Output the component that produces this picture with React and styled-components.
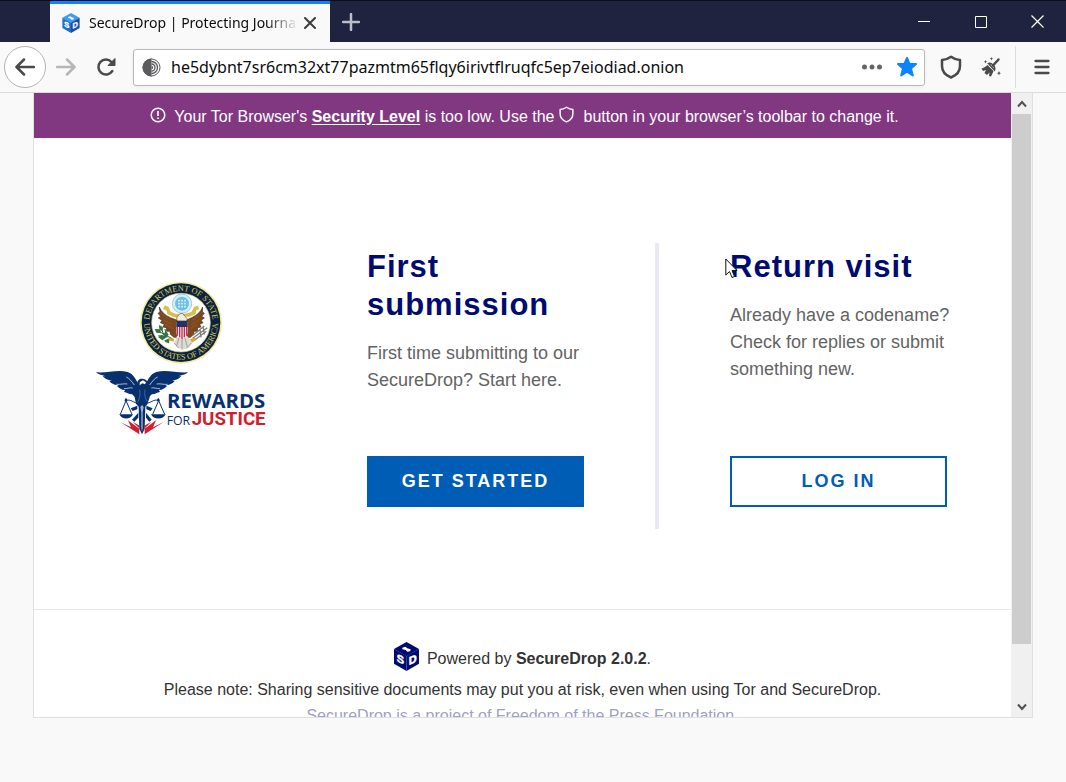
import React, { useState } from "react";
import styled, { createGlobalStyle } from "styled-components";

const GlobalStyle = createGlobalStyle`
  * {
    box-sizing: border-box;
  }
  body {
    margin: 0;
    background: #f9f9fa;
    font-family: "Liberation Sans", Arial, sans-serif;
    font-size: 16px;
  }
  button {
    font-family: inherit;
    padding: 0;
    border: none;
    background: none;
    cursor: pointer;
  }
  svg {
    display: block;
  }
`;

const BROWSER = styled.div`
  display: flex;
  flex-direction: column;
  height: 100vh;
  overflow: hidden;
`;

/* window title bar */
const TITLEBAR = styled.header`
  display: flex;
  flex: none;
  height: 42px;
  padding-left: 50px;
  background: #202340;
  border-top: 1px solid #0c0c14;
`;
const TAB = styled.div`
  display: flex;
  align-items: center;
  width: 280px;
  padding: 0 8px 0 12px;
  background: #f9f9fa;
  border-top: 3px solid #0a84ff;
`;
const TABTITLE = styled.span`
  flex: 1;
  margin-left: 9px;
  overflow: hidden;
  white-space: nowrap;
  font-family: "Noto Sans", sans-serif;
  font-size: 14px;
  line-height: 24px;
  color: #0c0c0d;
  mask-image: linear-gradient(to left, transparent, #000 32px);
`;
const TABBUTTON = styled.button`
  display: grid;
  place-items: center;
  width: ${(props) => props.$width || 24}px;
`;
const WINDOWBUTTONS = styled.div`
  display: flex;
  margin-left: auto;
`;

/* navigation toolbar */
const TOOLBAR = styled.nav`
  display: flex;
  flex: none;
  align-items: center;
  height: 51px;
  padding: 0 4px;
  background: #f9f9fa;
  border-bottom: 1px solid #dcdcdd;
`;
const ICONBUTTON = styled.button`
  display: grid;
  place-items: center;
  width: 40px;
  height: 40px;
`;
const BACK = styled(ICONBUTTON)`
  width: 42px;
  height: 42px;
  border: 1px solid #b4b4b6;
  border-radius: 50%;
  background: #fff;
`;
const URLBAR = styled.div`
  display: flex;
  flex: 1;
  align-items: center;
  height: 37px;
  margin: 0 6px 0 7px;
  padding-left: 8px;
  border: 1px solid #b8b8ba;
  border-radius: 3px;
  background: #fff;
  box-shadow: 0 1px 4px rgba(0, 0, 0, 0.06);
`;
const URLINPUT = styled.input`
  flex: 1;
  min-width: 0;
  height: 32px;
  padding: 0;
  margin-left: 10px;
  border: none;
  outline: none;
  background: none;
  font-family: "Noto Sans", sans-serif;
  font-size: 16px;
  color: #0c0c0d;
`;
const URLACTION = styled.button`
  display: grid;
  place-items: center;
  width: 35px;
  height: 32px;
`;
const SEPARATOR = styled.span`
  width: 1px;
  height: 42px;
  margin: 0 6px 0 4px;
  background: #dcdcdd;
`;

/* letterboxed page */
const STAGE = styled.div`
  display: flex;
  flex: 1;
  min-height: 0;
  padding: 0 33px 64px;
`;
const FRAME = styled.div`
  display: flex;
  flex: 1;
  min-width: 0;
  border: 1px solid #e0e0e1;
  border-top: none;
  background: #fff;
`;
const PAGE = styled.div`
  flex: 1;
  min-width: 0;
  overflow: hidden;
`;
const SCROLLBAR = styled.div`
  display: flex;
  flex: none;
  flex-direction: column;
  width: 21px;
  padding: 0 1px;
  background: #f0f0f0;
`;
const SCROLLBUTTON = styled.button`
  display: grid;
  place-items: center;
  height: 21px;
`;
const TRACK = styled.div`
  flex: 1;
`;
const THUMB = styled.div`
  background: #cdcdcd;
`;

const BANNER = styled.div`
  display: flex;
  align-items: center;
  justify-content: center;
  min-height: 45px;
  padding-top: 2px;
  background: #813881;
  color: #fff;
  line-height: 20px;
  a {
    color: #fff;
    font-weight: bold;
    text-underline-offset: 2px;
  }
  svg {
    flex: none;
    margin: 0 8px 4px 4px;
  }
`;

const MAIN = styled.main`
  display: grid;
  grid-template-columns: 262fr 363fr 352fr;
  padding: 105px 0 80px;
`;
const LOGO = styled.div`
  padding: 37px 0 0 61px;
`;
const CHOICE = styled.section`
  display: flex;
  flex-direction: column;
  align-items: flex-start;
  min-height: 286px;
  padding: 5px 56px 22px 71px;
  border-right: ${(props) => (props.$divided ? "4px solid #e8e8f6" : "none")};
`;
const H2 = styled.h2`
  position: relative;
  margin: 0 0 16px;
  color: #000b70;
  font-size: 31px;
  line-height: 38px;
  letter-spacing: 1px;
`;
const TEXT = styled.p`
  margin: 0;
  color: #636363;
  font-size: 18px;
  line-height: 27px;
`;
const CTA = styled.button`
  width: 217px;
  height: 51px;
  margin-top: auto;
  border: 2px solid #005db5;
  background: ${(props) => (props.$primary ? "#005db5" : "#fff")};
  color: ${(props) => (props.$primary ? "#fff" : "#005db5")};
  font-size: 18px;
  font-weight: bold;
  letter-spacing: 2px;
  text-transform: uppercase;
`;
/* mouse pointer resting on top of the heading */
const POINTER = styled.svg`
  position: absolute;
  left: -5px;
  top: 10px;
`;

const FOOTER = styled.footer`
  padding-top: 32px;
  border-top: 1px solid #e8e8ee;
  color: #333;
  text-align: center;
`;
const POWERED = styled.div`
  display: flex;
  align-items: flex-start;
  justify-content: center;
  gap: 8px;
  height: 30px;
  line-height: 20px;
  span {
    margin-top: 7px;
  }
`;
const NOTE = styled.p`
  margin: 8px 0 6px;
  line-height: 20px;
`;
const PROJECTLINK = styled.a`
  display: inline-block;
  color: #a09fc6;
  line-height: 20px;
  text-decoration: none;
`;

const CUBE_COLORS = {
  blue: { top: "#3f9bef", left: "#1c6fd0", right: "#124f9f" },
  navy: { top: "#000b70", left: "#000b70", right: "#000b70" },
};

const Cube = ({ width, height, tone }) => {
  const c = CUBE_COLORS[tone];
  return (
    <svg width={width} height={height} viewBox="0 0 75 87" aria-hidden="true">
      <path d="M37.5 0 75 21 37.5 43 0 21Z" fill={c.top} />
      <path d="M0 21 37.5 42V87L0 65Z" fill={c.left} />
      <path d="M75 21 37.5 42V87L75 65Z" fill={c.right} />
      <path
        d="M25 17 34 14 40 19 50 22 49 28 40 29 35 24 25 22Z"
        fill="#fff"
      />
      <g
        fill="#fff"
        stroke="#fff"
        strokeWidth="1.5"
        fontFamily="Liberation Sans, sans-serif"
        fontWeight="bold"
        fontSize="33"
        textAnchor="middle"
      >
        <text transform="translate(19 63) skewY(22)">S</text>
        <text transform="translate(56 64) skewY(-22)">D</text>
      </g>
    </svg>
  );
};

const Seal = () => (
  <g>
    <circle cx="288" cy="158" r="123" fill="#f2ec9d" />
    <circle cx="288" cy="158" r="118" fill="#0d2240" />
    <circle cx="288" cy="158" r="88" fill="#fff" stroke="#d9cf7c" strokeWidth="2" />
    <path id="sealTop" d="M193 158A95 95 0 0 1 383 158" fill="none" />
    <path id="sealBottom" d="M177 158A111 111 0 0 0 399 158" fill="none" />
    <g
      fill="#d5ca58"
      fontFamily="Liberation Serif, serif"
      textAnchor="middle"
    >
      <text fontSize="25">
        <textPath href="#sealTop" startOffset="50%">
          DEPARTMENT OF STATE
        </textPath>
      </text>
      <text fontSize="25">
        <textPath href="#sealBottom" startOffset="50%">
          UNITED STATES OF AMERICA
        </textPath>
      </text>
    </g>
    {/* glory above the eagle */}
    <circle cx="291" cy="101" r="29" fill="#d5eef9" stroke="#75b9dc" strokeWidth="2" />
    <circle cx="291" cy="101" r="21" fill="#71bee5" />
    <g fill="#e9f8ff">
      {[282, 291, 300].map((x) =>
        [92, 101, 110].map((y) => <circle key={x + "-" + y} cx={x} cy={y} r="2.5" />)
      )}
    </g>
    <path
      d="M240 107 251 112 254 124 268 131 284 134 298 133 320 127 328 112 338 108 341 117 333 120 331 132 314 139 267 140 248 132 245 120 235 117Z"
      fill="#dfbf3e"
      stroke="#b79632"
      strokeWidth="1"
    />
    {/* wings */}
    <path
      d="M223 111C229 126 240 136 256 143L277 151 279 202 267 202 256 193 255 184 245 184 244 173 234 171 238 163 226 158 231 151 220 144 227 139 219 130 225 126Z"
      fill="#7b481f"
      stroke="#4b2a15"
      strokeWidth="2"
    />
    <path
      d="M353 111C347 126 336 136 320 143L303 151 304 202 316 202 326 193 327 184 337 184 338 173 348 171 344 163 354 158 348 151 358 144 350 139 358 130 352 126Z"
      fill="#7b481f"
      stroke="#4b2a15"
      strokeWidth="2"
    />
    <path
      d="M230 132 257 151M234 149 260 163M241 163 263 175M347 132 322 151M343 149 320 163M337 163 316 175"
      stroke="#8d5729"
      strokeWidth="3"
    />
    <path d="M277 196 305 196 322 219 312 232 293 239 278 232 267 219Z" fill="#dedbd4" />
    <path
      d="M291 204V238M282 204 275 227M300 204 307 231M268 219 281 235M319 219 303 236"
      stroke="#85807a"
      strokeWidth="2"
    />
    <path d="M275 143 283 132 293 130 299 138 307 146 303 161 277 161Z" fill="#f1ebdc" stroke="#77502d" strokeWidth="2" />
    <path d="M279 136 268 140 277 143Z" fill="#d6a635" />
    <path d="M274 155H308V187C308 201 296 205 291 208C284 204 274 201 274 187Z" fill="#f8e9eb" />
    <path
      d="M277 170V197M284 170V202M291 170V207M298 170V202M305 170V197"
      stroke="#c52e51"
      strokeWidth="4"
    />
    <path d="M274 152H308V171H274Z" fill="#26335e" />
    {/* olive branch and arrows */}
    <path d="M218 182 263 207M228 175 239 199M240 177 246 203M220 197 241 200" stroke="#286838" strokeWidth="3" />
    <path
      d="M209 177 226 178 228 190 214 188ZM222 164 234 172 233 184 223 178ZM219 201 231 194 245 202 232 211ZM243 182 251 194 242 204 236 192ZM238 211 254 205 252 220 242 217Z"
      fill="#347640"
    />
    <path
      d="M323 205 367 173M326 212 364 184M322 197 358 168M345 179 348 202M355 173 358 194"
      stroke="#7d7f7f"
      strokeWidth="4"
    />
    <path d="M250 203 267 207 266 215 251 211ZM315 208 330 202 334 209 321 218Z" fill="#d8a936" />
  </g>
);

const Wing = () => (
  <g>
    <path
      d="M33 307C65 310 98 298 128 306C147 312 151 328 160 340L158 363 163 391C151 388 149 378 141 373 130 373 126 367 117 366L120 360C109 360 102 354 96 348L101 346C89 346 78 340 73 333L81 332C67 330 57 325 53 318L62 319C48 315 39 312 33 307Z"
      fill="#08306e"
    />
    <path
      d="M94 343C108 344 117 340 127 342M117 356C128 356 135 352 143 354M124 321C133 325 140 334 148 345"
      fill="none"
      stroke="#fff"
      strokeWidth="2"
    />
  </g>
);

const RewardsLogo = () => (
  <svg
    width="173"
    height="156"
    viewBox="30 30 519 468"
    role="img"
    aria-label="Rewards for Justice, Department of State"
  >
    <Seal />
    <Wing />
    <g transform="translate(342 0) scale(-1 1)">
      <Wing />
    </g>
    {/* head, body and sword */}
    <path
      d="M158 344C155 330 164 325 173 326C184 327 190 335 187 346L185 355 191 362 194 382 187 403 181 410 179 476 171 493 163 476 161 410 153 401 149 382 153 362Z"
      fill="#08306e"
    />
    <path d="M164 337 174 331 183 337 180 343 172 340 164 346Z" fill="#fff" />
    <path
      d="M164 359C167 374 164 386 157 398M180 359C177 375 182 387 187 395"
      fill="none"
      stroke="#5f7fae"
      strokeWidth="2"
    />
    <path d="M166 411 171 405 176 411 174 421V475L171 484 168 475V421Z" fill="#9fb2cc" />
    <path d="M171 424V480" stroke="#08306e" strokeWidth="2" />
    {/* scales */}
    <path
      d="M123 392C136 385 148 401 160 399H184C196 401 207 385 221 392M123 392 106 433M123 392 141 433M221 392 203 433M221 392 239 433"
      fill="none"
      stroke="#08306e"
      strokeWidth="3"
    />
    <path
      d="M103 433H144C138 450 109 450 103 433ZM198 433H242C236 450 204 450 198 433ZM119 389 123 383 127 389V394H119ZM216 389 220 383 224 389V394H216Z"
      fill="#08306e"
    />
    <path
      d="M137 415 157 407V418L143 423ZM184 407 203 415 197 423 184 418ZM141 449 160 428V443L148 455ZM183 428 200 449 193 455 183 443Z"
      fill="#08306e"
    />
    <path
      d="M106 456 138 472 129 451 163 476V493ZM236 456 204 472 213 451 179 476V493ZM143 455 164 467V476ZM199 455 178 467V476Z"
      fill="#d3202f"
    />
    <text
      x="246"
      y="415"
      fill="#08306e"
      fontFamily="Open Sans, sans-serif"
      fontWeight="bold"
      fontSize="61"
    >
      REWARDS
    </text>
    <text x="245" y="465" fill="#08306e" fontFamily="Open Sans, sans-serif" fontSize="37">
      FOR
    </text>
    <text
      x="320"
      y="465"
      fill="#cf202e"
      fontFamily="Roboto, sans-serif"
      fontWeight="bold"
      fontSize="56"
    >
      JUSTICE
    </text>
  </svg>
);

const Shield = ({ size, color, strokeWidth }) => (
  <svg width={size} height={size} viewBox="0 0 24 24" aria-hidden="true">
    <path
      d="M12 1.8C9 4 6 5 3 5V11C3 16.500 7 20.500 12 22.500C17 20.500 21 16.500 21 11V5C18 5 15 4 12 1.800Z"
      fill="none"
      stroke={color}
      strokeWidth={strokeWidth}
      strokeLinejoin="round"
    />
  </svg>
);

const TitleBar = () => (
  <TITLEBAR>
    <TAB>
      <Cube width={18} height={20} tone="blue" />
      <TABTITLE>SecureDrop | Protecting Journalists</TABTITLE>
      <TABBUTTON aria-label="Close tab">
        <svg width="12" height="12" viewBox="0 0 12 12">
          <path d="M1 1 11 11M11 1 1 11" stroke="#3d3d3f" strokeWidth="2" strokeLinecap="round" />
        </svg>
      </TABBUTTON>
    </TAB>
    <TABBUTTON $width={42} aria-label="New tab">
      <svg width="18" height="18" viewBox="0 0 18 18">
        <path d="M9 1V17M1 9H17" stroke="#bcbdc6" strokeWidth="2.5" strokeLinecap="round" />
      </svg>
    </TABBUTTON>
    <WINDOWBUTTONS>
      <TABBUTTON $width={57} aria-label="Minimize">
        <svg width="12" height="12" viewBox="0 0 12 12">
          <path d="M0 5.500H12" stroke="#fff" />
        </svg>
      </TABBUTTON>
      <TABBUTTON $width={57} aria-label="Maximize">
        <svg width="12" height="12" viewBox="0 0 12 12">
          <path d="M.5.5H11.500V11.500H.5Z" fill="none" stroke="#fff" />
        </svg>
      </TABBUTTON>
      <TABBUTTON $width={57} aria-label="Close">
        <svg width="13" height="13" viewBox="0 0 13 13">
          <path d="M.5.5 12.500 12.500M12.500.5.5 12.500" stroke="#fff" strokeWidth="1.2" />
        </svg>
      </TABBUTTON>
    </WINDOWBUTTONS>
  </TITLEBAR>
);

const Toolbar = () => {
  const [url, setUrl] = useState(
    "he5dybnt7sr6cm32xt77pazmtm65flqy6irivtflruqfc5ep7eiodiad.onion"
  );

  const handleChange = (e) => {
    setUrl(e.target.value);
  };

  return (
    <TOOLBAR>
      <BACK aria-label="Back">
        <svg width="20" height="18" viewBox="0 0 20 18">
          <path
            d="M19 9H2M9 1.500 1.500 9 9 16.500"
            fill="none"
            stroke="#4a4a4c"
            strokeWidth="2.500"
            strokeLinecap="round"
            strokeLinejoin="round"
          />
        </svg>
      </BACK>
      <ICONBUTTON aria-label="Forward">
        <svg width="20" height="18" viewBox="0 0 20 18">
          <path
            d="M1 9H18M11 1.500 18.500 9 11 16.500"
            fill="none"
            stroke="#b6b6b8"
            strokeWidth="2.500"
            strokeLinecap="round"
            strokeLinejoin="round"
          />
        </svg>
      </ICONBUTTON>
      <ICONBUTTON aria-label="Reload">
        <svg width="20" height="20" viewBox="0 0 20 20">
          <path
            d="M16.300 14A7.500 7.500 0 1 1 15.500 5"
            fill="none"
            stroke="#4a4a4c"
            strokeWidth="2.500"
            strokeLinecap="round"
          />
          <path d="M19 1.500V8.500H12Z" fill="#4a4a4c" stroke="#4a4a4c" strokeLinejoin="round" />
        </svg>
      </ICONBUTTON>
      <URLBAR>
        <svg width="19" height="19" viewBox="0 0 19 19" aria-hidden="true">
          <circle cx="9.5" cy="9.5" r="8.500" fill="#f5f5f5" stroke="#5b5b5d" />
          <path d="M9.500.5A9 9 0 0 0 9.500 18.500Z" fill="#5b5b5d" />
          <path
            d="M9.500 3.500A6 6 0 0 1 9.500 15.500M9.500 6A3.500 3.500 0 0 1 9.500 13M9.500 8.500A1 1 0 0 1 9.500 10.500"
            fill="none"
            stroke="#5b5b5d"
            strokeWidth="1.3"
          />
        </svg>
        <URLINPUT aria-label="Address" value={url} onChange={handleChange} spellCheck={false} />
        <URLACTION aria-label="Page actions">
          <svg width="20" height="6" viewBox="0 0 20 6">
            <g fill="#656567">
              <circle cx="2.500" cy="3" r="2.500" />
              <circle cx="10" cy="3" r="2.500" />
              <circle cx="17.500" cy="3" r="2.500" />
            </g>
          </svg>
        </URLACTION>
        <URLACTION aria-label="Bookmark this page">
          <svg width="20" height="20" viewBox="0 0 20 20">
            <path
              d="M10 1 12.600 7H19L14 11.400 15.800 18.500 10 14.700 4.200 18.500 6 11.400 1 7H7.400Z"
              fill="#0a84ff"
              stroke="#0a84ff"
              strokeWidth="2"
              strokeLinejoin="round"
            />
          </svg>
        </URLACTION>
      </URLBAR>
      <ICONBUTTON aria-label="Security level">
        <Shield size={24} color="#4a4a4c" strokeWidth={2.5} />
      </ICONBUTTON>
      <ICONBUTTON aria-label="New identity">
        <svg width="20" height="20" viewBox="0 0 20 20">
          <path d="M12 8.500 17.500 2.500" stroke="#4a4a4c" strokeWidth="2.500" strokeLinecap="round" />
          <path
            d="M7.500 6.500C9 5.800 10.500 6.500 12 8S14 11.500 13.500 13Z"
            fill="none"
            stroke="#4a4a4c"
            strokeWidth="1.500"
          />
          <path
            d="M6.500 8C4.500 10 2.500 11 .5 11.500L2 14 5 13 3.500 16 6 18 8.500 15.500 8 19 10 19.500C11 17.500 12 15.500 12.500 14Z"
            fill="#4a4a4c"
          />
          <path
            d="M10.500 0 11 1.300 12.300 1.800 11 2.300 10.500 3.600 10 2.300 8.700 1.800 10 1.300ZM4.500 3 5 4.200 6.200 4.700 5 5.200 4.500 6.400 4 5.200 2.800 4.700 4 4.200ZM18 14 18.600 15.600 20 16.200 18.600 16.800 18 18.400 17.400 16.800 15.800 16.200 17.400 15.600Z"
            fill="#4a4a4c"
          />
        </svg>
      </ICONBUTTON>
      <SEPARATOR />
      <ICONBUTTON aria-label="Menu">
        <svg width="16" height="16" viewBox="0 0 16 16">
          <path
            d="M1.500 2H14.500M1.500 8H14.500M1.500 14H14.500"
            stroke="#4a4a4c"
            strokeWidth="2.300"
            strokeLinecap="round"
          />
        </svg>
      </ICONBUTTON>
    </TOOLBAR>
  );
};

const Chevron = ({ d }) => (
  <svg width="10" height="8" viewBox="0 0 10 8">
    <path d={d} fill="none" stroke="#505050" strokeWidth="2" />
  </svg>
);

const SourcePage = () => (
  <PAGE>
    <BANNER>
      <svg width="16" height="16" viewBox="0 0 16 16" aria-hidden="true">
        <circle cx="8" cy="8" r="6.800" fill="none" stroke="#fff" strokeWidth="1.500" />
        <path d="M8 4V9M8 10.500V12" stroke="#fff" strokeWidth="1.600" />
      </svg>
      <span>
        Your Tor Browser's <a href="#security">Security Level</a> is too low. Use the
      </span>
      <Shield size={17} color="#fff" strokeWidth={2} />
      <span>button in your browser’s toolbar to change it.</span>
    </BANNER>
    <MAIN>
      <LOGO>
        <RewardsLogo />
      </LOGO>
      <CHOICE $divided>
        <H2>First submission</H2>
        <TEXT>First time submitting to our SecureDrop? Start here.</TEXT>
        <CTA $primary>Get started</CTA>
      </CHOICE>
      <CHOICE>
        <H2>
          Return visit
          <POINTER width="13" height="21" viewBox="0 0 13 21" aria-hidden="true">
            <path
              d="M.8 1V17L4.500 13.500 7 19.500 9.500 18.500 7 12.500H12Z"
              fill="#fff"
              stroke="#111"
            />
          </POINTER>
        </H2>
        <TEXT>Already have a codename? Check for replies or submit something new.</TEXT>
        <CTA>Log in</CTA>
      </CHOICE>
    </MAIN>
    <FOOTER>
      <POWERED>
        <Cube width={25} height={29} tone="navy" />
        <span>
          Powered by <b>SecureDrop 2.0.2</b>.
        </span>
      </POWERED>
      <NOTE>
        Please note: Sharing sensitive documents may put you at risk, even when using Tor
        and SecureDrop.
      </NOTE>
      <PROJECTLINK href="#project">
        SecureDrop is a project of Freedom of the Press Foundation.
      </PROJECTLINK>
    </FOOTER>
  </PAGE>
);

// share of the page that fits in the frame, in percent
const VISIBLE = 91;

const App = () => {
  return (
    <BROWSER>
      <GlobalStyle />
      <TitleBar />
      <Toolbar />
      <STAGE>
        <FRAME>
          <SourcePage />
          <SCROLLBAR>
            <SCROLLBUTTON aria-label="Scroll up">
              <Chevron d="M1 6.500 5 2 9 6.500" />
            </SCROLLBUTTON>
            <TRACK>
              <THUMB style={{ height: `${VISIBLE}%` }} />
            </TRACK>
            <SCROLLBUTTON aria-label="Scroll down">
              <Chevron d="M1 1.500 5 6 9 1.500" />
            </SCROLLBUTTON>
          </SCROLLBAR>
        </FRAME>
      </STAGE>
    </BROWSER>
  );
};

export default App;
